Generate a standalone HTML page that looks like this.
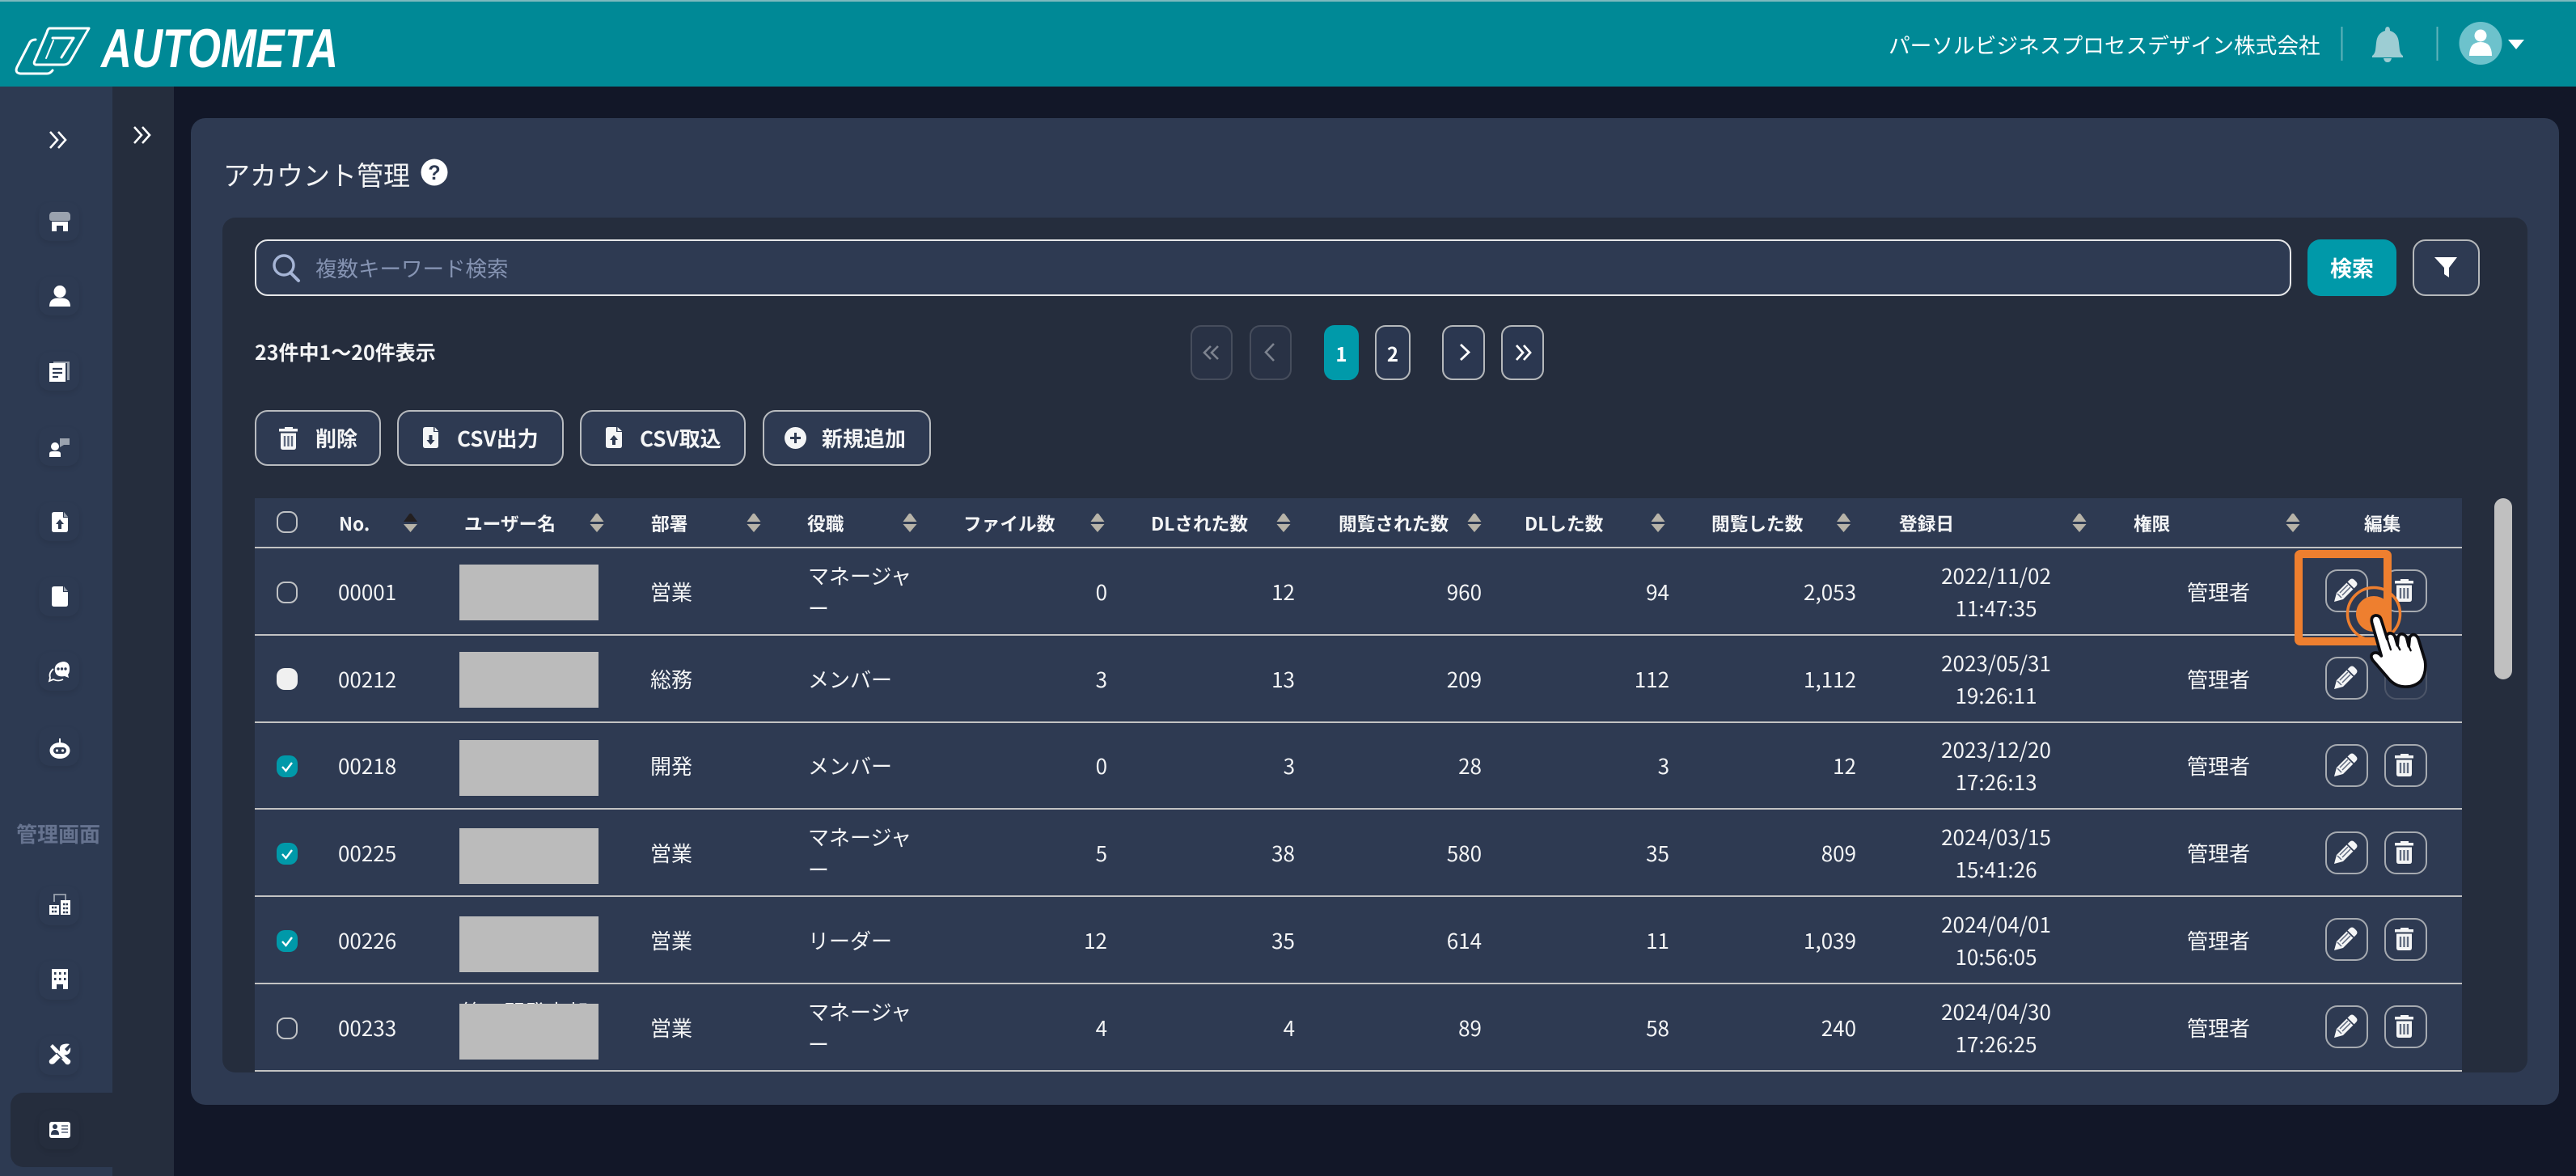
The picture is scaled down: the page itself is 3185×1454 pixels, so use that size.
<!DOCTYPE html>
<html lang="ja"><head><meta charset="utf-8"><title>アカウント管理</title>
<style>
*{box-sizing:border-box;margin:0;padding:0}
html,body{width:3185px;height:1454px;overflow:hidden;background:#121728}
body{position:relative;font-family:"Noto Sans CJK JP","Liberation Sans",sans-serif;color:#f4f5f6;font-size:26px}
.a{position:absolute}
.btn{position:absolute;border:2px solid #b8bbbf;border-radius:16px;background:#2e3a52;font-weight:700;font-size:26px;line-height:65px;color:#f4f5f6}
.btn span{position:absolute;white-space:nowrap}
.pg{position:absolute;top:402px;height:68px;border:2px solid #b5b8bb;border-radius:13px;background:#2b3750;font-weight:700;font-size:24px;color:#fff;text-align:center;line-height:66px}
.pg.d{border-color:#464d5c;background:#293245}
.pg.on{border-color:#009aaa;background:#009aaa}
.th{position:absolute;top:0;height:62px;line-height:62px;font-size:22.7px;font-weight:700;white-space:nowrap;color:#f4f5f6}
.row{position:absolute;left:0;width:2729px;height:107.75px;border-bottom:2px solid #c3c3c3}
.c{position:absolute;top:2px;bottom:0;display:flex;align-items:center;line-height:40px;white-space:nowrap}
.r{justify-content:flex-end;text-align:right}
.no{left:103px}.de{left:489px}.ro{left:684px}
.n1{right:1675px}.n2{right:1443px}.n3{right:1212px}.n4{right:980px}.n5{right:749px}
.dt{left:2053px;width:200px;justify-content:center;text-align:center}
.au{right:262px}
.box{position:absolute;left:253px;top:20px;width:172px;height:69px;background:#bbb}
.sb{position:absolute;left:48px;width:50px;height:48px;border-radius:14px;background:#2d3a52;box-shadow:0 3px 7px rgba(0,0,0,.09)}
</style></head><body>

<div class="a" style="left:0;top:0;width:3185px;height:107px;background:#008996;border-top:2px solid #7db9be"></div>
<div class="a" style="left:0;top:107px;width:139px;height:1347px;background:#2d3a52"></div>
<div class="a" style="left:139px;top:107px;width:76px;height:1347px;background:#252d3d"></div>

<div class="sb" style="top:250px"></div><div class="sb" style="top:342px"></div><div class="sb" style="top:435px"></div><div class="sb" style="top:528px"></div>
<div class="sb" style="top:621px"></div><div class="sb" style="top:714px"></div><div class="sb" style="top:806px"></div><div class="sb" style="top:899px"></div>
<div class="sb" style="top:1096px"></div><div class="sb" style="top:1188px"></div><div class="sb" style="top:1281px"></div>
<div class="a" style="left:13px;top:1351px;width:126px;height:92px;background:#252d3d;border-radius:16px 0 0 16px"></div>
<div class="a" style="left:48px;top:1373px;width:50px;height:48px;border-radius:14px;background:#252d3d;box-shadow:0 3px 7px rgba(0,0,0,.09)"></div>

<div class="a" style="left:20px;top:1011px;font-size:26px;line-height:40px;font-weight:700;color:#66738f;white-space:nowrap">管理画面</div>

<div class="a" style="left:2335px;top:35px;font-size:26.7px;line-height:40px;color:#fff;white-space:nowrap">パーソルビジネスプロセスデザイン株式会社</div>

<div class="a" style="left:236px;top:146px;width:2928px;height:1220px;background:#2e3a52;border-radius:18px"></div>
<div class="a" style="left:276px;top:190px;font-size:33px;line-height:50px;color:#f4f5f6;white-space:nowrap">アカウント管理</div>
<div class="a" style="left:275px;top:269px;width:2850px;height:1057px;background:#252d3d;border-radius:16px"></div>

<div class="a" style="left:315px;top:296px;width:2518px;height:70px;border:2px solid #e6e7e9;border-radius:16px;background:#2e3a52"></div>
<div class="a" style="left:390px;top:311px;font-size:26.5px;line-height:40px;color:#8593b2;white-space:nowrap">複数キーワード検索</div>
<div class="a" style="left:2853px;top:296px;width:110px;height:70px;background:#0099a9;border-radius:16px;text-align:center;line-height:70px;font-weight:700;font-size:27px;color:#fff">検索</div>
<div class="a" style="left:2983px;top:296px;width:83px;height:70px;background:#2e3a52;border:2px solid #b5b8bb;border-radius:16px"></div>

<div class="a" style="left:315px;top:415px;font-size:25px;line-height:40px;font-weight:700;color:#f4f5f6;white-space:nowrap">23件中1〜20件表示</div>

<div class="pg d" style="left:1472px;width:52px"></div>
<div class="pg d" style="left:1545px;width:52px"></div>
<div class="pg on" style="left:1637px;width:43px">1</div>
<div class="pg" style="left:1700px;width:44px">2</div>
<div class="pg" style="left:1783px;width:53px"></div>
<div class="pg" style="left:1856px;width:53px"></div>

<div class="btn" style="left:315px;top:507px;width:156px;height:69px"><span style="left:73px">削除</span></div>
<div class="btn" style="left:491px;top:507px;width:206px;height:69px"><span style="left:72px">CSV出力</span></div>
<div class="btn" style="left:717px;top:507px;width:205px;height:69px"><span style="left:72px">CSV取込</span></div>
<div class="btn" style="left:943px;top:507px;width:208px;height:69px"><span style="left:71px">新規追加</span></div>

<div class="a" style="left:315px;top:616px;width:2729px;height:710px;overflow:hidden;background:#2e3a52">
  <div class="a" style="left:0;top:0;width:2729px;height:62px;border-bottom:2px solid #c3c3c3"></div>
  <div class="th" style="left:104px">No.</div>
  <div class="th" style="left:259px">ユーザー名</div>
  <div class="th" style="left:490px">部署</div>
  <div class="th" style="left:683px">役職</div>
  <div class="th" style="left:876px">ファイル数</div>
  <div class="th" style="left:1108px">DLされた数</div>
  <div class="th" style="left:1340px">閲覧された数</div>
  <div class="th" style="left:1570px">DLした数</div>
  <div class="th" style="left:1801px">閲覧した数</div>
  <div class="th" style="left:2033px">登録日</div>
  <div class="th" style="left:2323px">権限</div>
  <div class="th" style="left:2608px">編集</div>

  <div class="row" style="top:62px">
    <div class="c no">00001</div><div class="box"></div><div class="c de">営業</div><div class="c ro">マネージャ<br>ー</div>
    <div class="c r n1">0</div><div class="c r n2">12</div><div class="c r n3">960</div><div class="c r n4">94</div><div class="c r n5">2,053</div>
    <div class="c dt">2022/11/02<br>11:47:35</div><div class="c r au">管理者</div>
  </div>
  <div class="row" style="top:169.75px">
    <div class="c no">00212</div><div class="box"></div><div class="c de">総務</div><div class="c ro">メンバー</div>
    <div class="c r n1">3</div><div class="c r n2">13</div><div class="c r n3">209</div><div class="c r n4">112</div><div class="c r n5">1,112</div>
    <div class="c dt">2023/05/31<br>19:26:11</div><div class="c r au">管理者</div>
  </div>
  <div class="row" style="top:277.5px">
    <div class="c no">00218</div><div class="box" style="top:21.5px"></div><div class="c de">開発</div><div class="c ro">メンバー</div>
    <div class="c r n1">0</div><div class="c r n2">3</div><div class="c r n3">28</div><div class="c r n4">3</div><div class="c r n5">12</div>
    <div class="c dt">2023/12/20<br>17:26:13</div><div class="c r au">管理者</div>
  </div>
  <div class="row" style="top:385.25px">
    <div class="c no">00225</div><div class="box" style="top:23px"></div><div class="c de">営業</div><div class="c ro">マネージャ<br>ー</div>
    <div class="c r n1">5</div><div class="c r n2">38</div><div class="c r n3">580</div><div class="c r n4">35</div><div class="c r n5">809</div>
    <div class="c dt">2024/03/15<br>15:41:26</div><div class="c r au">管理者</div>
  </div>
  <div class="row" style="top:493px">
    <div class="c no">00226</div><div class="box" style="top:24px"></div><div class="c de">営業</div><div class="c ro">リーダー</div>
    <div class="c r n1">12</div><div class="c r n2">35</div><div class="c r n3">614</div><div class="c r n4">11</div><div class="c r n5">1,039</div>
    <div class="c dt">2024/04/01<br>10:56:05</div><div class="c r au">管理者</div>
  </div>
  <div class="row" style="top:600.75px">
    <div class="a" style="left:256px;top:19px;font-size:26px;line-height:30px;white-space:nowrap">第二開発本部</div>
    <div class="c no">00233</div><div class="box" style="top:24px"></div><div class="c de">営業</div><div class="c ro">マネージャ<br>ー</div>
    <div class="c r n1">4</div><div class="c r n2">4</div><div class="c r n3">89</div><div class="c r n4">58</div><div class="c r n5">240</div>
    <div class="c dt">2024/04/30<br>17:26:25</div><div class="c r au">管理者</div>
  </div>
</div>

<div class="a" style="left:3084px;top:616px;width:22px;height:224px;border-radius:11px;background:#c0c0c0"></div>

<svg class="a" style="left:0;top:0" width="3185" height="1454" viewBox="0 0 3185 1454" xmlns="http://www.w3.org/2000/svg">
<defs>
  <g id="pen">
    <rect x="1" y="1" width="51" height="51" rx="14" fill="#2e3a52" stroke="#a6aab0" stroke-width="2"/>
    <path d="M11 40 L14 29 L30 13 Q33 10 36 13 L38 15 Q41 18 38 21 L22 37 Z" fill="#f4f5f6"/>
    <path d="M27 16 L35 24" stroke="#2e3a52" stroke-width="1.8" fill="none"/>
    <path d="M15 30 L20 35 M18 29 L28 19 M21 32 L31 22" stroke="#5f6a7f" stroke-width="1.5" fill="none"/>
  </g>
  <g id="bin">
    <path d="M20 14 V12 H30 V14 H36 V17.5 H13 V14 Z" fill="#f4f5f6"/>
    <path d="M15 19.5 H34 V37 Q34 40 31 40 H18 Q15 40 15 37 Z" fill="#f4f5f6"/>
    <path d="M20 23 V36 M24.5 23 V36 M29 23 V36" stroke="#5f6a7f" stroke-width="2.4" fill="none"/>
  </g>
  <g id="trashb">
    <rect x="1" y="1" width="51" height="51" rx="14" fill="#2e3a52" stroke="#a6aab0" stroke-width="2"/>
    <use href="#bin"/>
  </g>
  <g id="cb"><rect x="1" y="1" width="24" height="25" rx="9" fill="#2e3a52" stroke="#bfc1c4" stroke-width="2"/></g>
  <g id="cbon"><rect x="0" y="0" width="26" height="27" rx="10" fill="#0099a9"/><path d="M7 14 L11.5 19 L19 9" fill="none" stroke="#fff" stroke-width="2.4"/></g>
  <g id="sort"><path d="M0 11 L7 1.5 Q8.5 0 10 1.5 L17 11 Z" fill="#b7b3a8"/><path d="M0 14 H17 L8.5 24 Z" fill="#b7b3a8"/></g>
  <g id="sortd"><path d="M0 11 L7 1.5 Q8.5 0 10 1.5 L17 11 Z" fill="#231f20"/><path d="M0 14 H17 L8.5 24 Z" fill="#b7b3a8"/></g>
</defs>

<!-- logo -->
<g fill="none" stroke="#fff" stroke-width="3" stroke-linejoin="round" stroke-linecap="round">
  <path d="M61 35 H110 L87 75 Q84 80 79 80 H44 Q41 79 43 75 L58 40 Q59 36 61 35 Z"/>
  <path d="M65 47 H91 L76 71"/>
  <path d="M44 49 Q38 49 36 54 L21 83 Q18 90 25 91 H58 Q62 91 65 87"/>
  <path d="M57 72 L66 50" stroke-width="2"/>
</g>
<text x="125" y="83" font-family="Liberation Sans" font-weight="700" font-style="italic" font-size="68" fill="#fff" textLength="293" lengthAdjust="spacingAndGlyphs">AUTOMETA</text>

<!-- header right -->
<path d="M2895.5 33 V75 M3013.5 33 V75" stroke="#5fb3bb" stroke-width="2"/>
<path d="M2952 33 Q2955 33 2955 38 Q2965 41 2966 53 L2967 62 Q2968 67 2971 69 V71 H2933 V69 Q2936 67 2937 62 L2938 53 Q2939 41 2949 38 Q2949 33 2952 33 Z M2947 72 H2957 Q2956 77 2952 77 Q2948 77 2947 72 Z" fill="#9dcdd3"/>
<circle cx="3067" cy="53.5" r="26.5" fill="#6dc2cc"/>
<circle cx="3067" cy="44" r="7.5" fill="#fff"/>
<path d="M3053 69 Q3053 52 3067 52 Q3081 52 3081 69 Z" fill="#fff"/>
<path d="M3101 49 H3121 L3111 61 Z" fill="#fff"/>

<!-- chevrons -->
<g fill="none" stroke="#fff" stroke-width="2.6">
  <path d="M62 163 L71 173 L62 183 M72 163 L81 173 L72 183"/>
  <path d="M166 157 L175 167 L166 177 M176 157 L185 167 L176 177"/>
</g>

<!-- sidebar icons -->
<path d="M65 262 H83 Q86 262 87 266 V270 Q87 273 84 273 H64 Q61 273 61 270 V266 Q62 262 65 262 Z" fill="#9aa2ae"/>
<path d="M64 274 H84 V286 H78 V279 H70 V286 H64 Z" fill="#fff"/>
<circle cx="74" cy="360.5" r="7.5" fill="#fff"/><path d="M61 379 Q61 369 71 368.5 H77 Q87 369 87 379 Z" fill="#fff"/>
<path d="M66 449 V447 H86 V470 H83 V449 Z" fill="#9aa2ae"/>
<rect x="61" y="449" width="20" height="23" fill="#fff"/>
<path d="M65 456 H77 M65 461 H77 M65 466 H72" stroke="#2d3a52" stroke-width="2.2"/>
<path d="M74 542 H86 V550 H79 L74 553 Z" fill="#9aa2ae"/>
<circle cx="68" cy="552" r="5" fill="#fff"/><path d="M61 565 V561 Q61 558 65 558 H71 Q75 558 75 561 V565 Z" fill="#fff"/>

<path d="M67 633 H78 V640 H84 V655 Q84 658 81 658 H67 Q64 658 64 655 V636 Q64 633 67 633 Z" fill="#fff"/>
<path d="M79 633 L84 639 H79 Z" fill="#9aa2ae"/>
<path d="M74 642 L79 648 H76 V654 H72 V648 H69 Z" fill="#2d3a52"/>
<path d="M67 725 H78 V732 H84 V747 Q84 750 81 750 H67 Q64 750 64 747 V728 Q64 725 67 725 Z" fill="#fff"/>
<path d="M79 725 L84 731 H79 Z" fill="#9aa2ae"/>
<path d="M66 827 Q60 832 62 838 L61 842 L66 840 Q72 843 78 840" fill="none" stroke="#fff" stroke-width="1.8"/>
<path d="M78 818 Q86 818 86 827 Q86 832 84 834 L85 838 L80 836 Q70 838 68 830 Q66 820 78 818 Z" fill="#fff"/>
<circle cx="72" cy="827" r="1.7" fill="#2d3a52"/><circle cx="76.5" cy="827" r="1.7" fill="#2d3a52"/><circle cx="81" cy="827" r="1.7" fill="#2d3a52"/>
<path d="M74 913 V919" stroke="#fff" stroke-width="2"/>
<ellipse cx="74" cy="928" rx="12.5" ry="10" fill="#fff"/>
<rect x="66" y="924" width="16" height="8" rx="4" fill="#2d3a52"/><circle cx="70.5" cy="928" r="1.6" fill="#fff"/><circle cx="77.5" cy="928" r="1.6" fill="#fff"/>

<path d="M67 1115 V1106 H81 V1113" fill="none" stroke="#9aa2ae" stroke-width="1.8"/>
<path d="M61 1119 H73 V1131 H61 Z M75 1113 H87 V1131 H75 Z" fill="#fff"/>
<path d="M64 1122 H70 M64 1127 H70 M78 1118 H84 M78 1123 H84 M78 1128 H84" stroke="#2d3a52" stroke-width="2.4" stroke-dasharray="2.5 1"/>
<path d="M64 1198 H84 V1223 H78 V1217 H70 V1223 H64 Z" fill="#fff"/>
<g fill="#2d3a52"><rect x="67" y="1202" width="2.5" height="3"/><rect x="73" y="1202" width="2.5" height="3"/><rect x="79" y="1202" width="2.5" height="3"/><rect x="67" y="1209" width="2.5" height="3"/><rect x="73" y="1209" width="2.5" height="3"/><rect x="79" y="1209" width="2.5" height="3"/></g>
<!-- tools: screwdriver + wrench -->
<path d="M62 1294 L65 1291 L74 1300 L87 1311 Q88 1314 85 1316 Q82 1317 80 1314 L70 1303 Z" fill="#fff"/>
<path d="M86 1291 L80 1297 L83 1300 L87 1295 Q88 1302 83 1304 Q80 1305 78 1304 L67 1315 Q63 1317 61 1314 Q60 1311 63 1309 L74 1299 Q73 1292 79 1291 Q83 1290 86 1291 Z" fill="#fff"/>
<path d="M70 1302 L77 1309" stroke="#2d3a52" stroke-width="1.5"/>
<rect x="61" y="1387" width="26" height="20" rx="3" fill="#fff"/>
<circle cx="68" cy="1393" r="3" fill="#2d3a52"/><path d="M63 1403 Q63 1397 68 1397 Q73 1397 73 1403 Z" fill="#2d3a52"/>
<path d="M76 1392 H84 M76 1396 H84 M76 1400 H84" stroke="#7f8899" stroke-width="2"/>

<!-- title help -->
<circle cx="537" cy="213" r="16.5" fill="#fff"/>
<text x="537" y="222" text-anchor="middle" font-family="Liberation Sans" font-weight="700" font-size="25" fill="#2e3a52">?</text>

<!-- search, filter -->
<circle cx="351" cy="328" r="12" fill="none" stroke="#a6b5d6" stroke-width="3.4"/>
<path d="M359 337 L369 347" stroke="#a6b5d6" stroke-width="4" stroke-linecap="round"/>
<path d="M3010 318 H3038 L3028 331 V343 L3022 339 V331 Z" fill="#fff"/>

<!-- pagination -->
<g fill="none" stroke="#7d838f" stroke-width="2.6">
  <path d="M1497 428 L1489 436 L1497 444 M1506 428 L1498 436 L1506 444"/>
  <path d="M1575 425 L1565 435.5 L1575 446"/>
</g>
<g fill="none" stroke="#fff" stroke-width="2.8">
  <path d="M1806 426 L1816 435.5 L1806 445"/>
  <path d="M1875 427 L1883 436 L1875 445 M1884 427 L1892 436 L1884 445"/>
</g>

<!-- toolbar icons -->
<use href="#bin" x="332" y="516"/>
<path d="M526 528 H536 V534 H542 V551 Q542 554 539 554 H526 Q523 554 523 551 V531 Q523 528 526 528 Z" fill="#f4f5f6"/>
<path d="M537.5 528 L542 533 H537.5 Z" fill="#f4f5f6"/>
<path d="M532.5 550 L527.5 544 H530.5 V538 H534.5 V544 H537.5 Z" fill="#2e3a52"/>
<path d="M752 528 H762 V534 H769 V551 Q769 554 766 554 H752 Q749 554 749 551 V531 Q749 528 752 528 Z" fill="#f4f5f6"/>
<path d="M763.5 528 L769 533 H763.5 Z" fill="#f4f5f6"/>
<path d="M759 538 L764 544 H761 V550 H757 V544 H754 Z" fill="#2e3a52"/>
<circle cx="983.5" cy="541.5" r="13.5" fill="#f4f5f6"/>
<path d="M983.5 535 V548 M977 541.5 H990" stroke="#2e3a52" stroke-width="3"/>

<!-- table header icons -->
<use href="#cb" x="342" y="632"/>
<use href="#sortd" x="499" y="634"/>
<use href="#sort" x="729.5" y="634"/>
<use href="#sort" x="923.5" y="634"/>
<use href="#sort" x="1116.5" y="634"/>
<use href="#sort" x="1348.5" y="634"/>
<use href="#sort" x="1578.5" y="634"/>
<use href="#sort" x="1814.5" y="634"/>
<use href="#sort" x="2041.5" y="634"/>
<use href="#sort" x="2271" y="634"/>
<use href="#sort" x="2562.5" y="634"/>
<use href="#sort" x="2826.5" y="634"/>

<!-- check boxes -->
<use href="#cb" x="342" y="719"/>
<rect x="342" y="826" width="26" height="27" rx="10" fill="#f0f0f0"/>
<use href="#cbon" x="342" y="934"/>
<use href="#cbon" x="342" y="1042"/>
<use href="#cbon" x="342" y="1150"/>
<use href="#cb" x="342" y="1258"/>

<!-- row actions -->
<use href="#pen" x="2875" y="704"/><use href="#trashb" x="2948" y="704"/>
<use href="#pen" x="2875" y="812"/><rect x="2949" y="813" width="51" height="51" rx="14" fill="#2e3a52" stroke="#4c5568" stroke-width="2"/>
<use href="#pen" x="2875" y="920"/><use href="#trashb" x="2948" y="920"/>
<use href="#pen" x="2875" y="1028"/><use href="#trashb" x="2948" y="1028"/>
<use href="#pen" x="2875" y="1135"/><use href="#trashb" x="2948" y="1135"/>
<use href="#pen" x="2875" y="1243"/><use href="#trashb" x="2948" y="1243"/>

<!-- callout -->
<rect x="2842" y="685" width="110" height="108" rx="2" fill="none" stroke="#ee7f2f" stroke-width="10"/>
<circle cx="2935" cy="759" r="32.5" fill="none" stroke="#ee7f2f" stroke-width="3.5"/>
<circle cx="2935" cy="759" r="22" fill="#ee7f2f"/>
<g transform="translate(2830 675) scale(.3333)">
  <path d="M312 425 Q298 405 315 397 Q330 392 343 408 L308 285 Q303 262 320 258 Q338 256 343 275 L365 345 L362 335 Q368 320 382 325 Q392 328 396 345 L403 368 L405 340 Q410 322 425 328 Q435 332 438 345 L445 372 L448 340 Q455 325 468 330 Q478 335 482 350 L505 425 Q512 470 490 500 Q465 525 425 522 Q395 520 372 495 Z" fill="#fff" stroke="#0c0c10" stroke-width="11" stroke-linejoin="round"/>
  <path d="M365 345 L378 385 M403 368 L412 385 M445 372 L452 388" stroke="#0c0c10" stroke-width="7" fill="none" stroke-linecap="round"/>
</g>
</svg>
</body></html>
